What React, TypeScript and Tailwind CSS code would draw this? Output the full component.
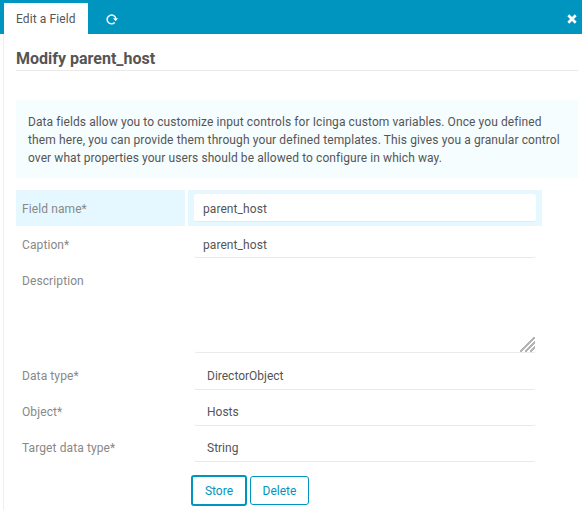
import type { ReactNode } from "react";

function Row({ label, active = false, tall = false, children }: { label: string; active?: boolean; tall?: boolean; children: ReactNode }) {
  return (
    <div className={`flex gap-[3px] ${tall ? "h-[95px]" : "h-9"}`}>
      <label className={`w-[169px] pl-1.5 pt-[10px] tracking-[0.1px] text-[#888] ${active ? "bg-[#e5f8ff]" : ""}`}>{label}</label>
      <div className={`w-[354px] px-1.5 py-1 ${active ? "bg-[#e5f8ff]" : ""}`}>{children}</div>
    </div>
  );
}

const field = "flex w-full rounded-[3px] border-b border-[#eaeaea] bg-white";

export default function App() {
  return (
    <div className="flex h-[510px] w-[582px] flex-col overflow-hidden bg-white font-[Roboto,sans-serif] text-[12px] leading-[18px] text-[#555]">
      <header className="flex h-[34px] shrink-0 bg-[#0095bf] pl-1 pt-[3px]">
        <div className="h-[31px] w-[84px] bg-white pl-3 pt-[7px] tracking-[0.1px]">Edit a Field</div>
        <button className="ml-[18px] mt-[10px] h-3 w-3 text-white" aria-label="Refresh">
          <svg viewBox="0 0 12 12" className="h-3 w-3" fill="none">
            <path d="M8.7 9.5A4.4 4.4 0 1 1 9.9 5.8" stroke="currentColor" strokeWidth="1.4" />
            <path d="M7 5.3H12L9.6 8.2Z" fill="currentColor" />
          </svg>
        </button>
        <button className="ml-auto mr-[5px] mt-[11px] h-[10px] w-[10px] text-white" aria-label="Close">
          <svg viewBox="0 0 10 10" className="h-[10px] w-[10px]">
            <path d="M1.3 1.3 8.7 8.7M8.7 1.3 1.3 8.7" stroke="currentColor" strokeWidth="2.7" />
          </svg>
        </button>
      </header>
      <main className="ml-[3px] flex-1 border-l border-[#eee] pl-3 pr-1">
        <h1 className="h-[37px] border-b border-[#eaeaea] pt-[13px] text-[16px] font-bold leading-[24px]">Modify parent_host</h1>
        <p className="mt-[29px] h-[78px] whitespace-nowrap bg-[#f5fdff] px-3 py-[13px]">
          <span className="tracking-[0.09px]">Data fields allow you to customize input controls for Icinga custom variables. Once you defined</span><br />
          <span className="tracking-[0.108px]">them here, you can provide them through your defined templates. This gives you a granular control</span><br />
          <span className="tracking-[0.08px]">over what properties your users should be allowed to configure in which way.</span>
        </p>
        <form className="mt-3">
          <Row label="Field name*" active>
            <div className={`${field} h-7 pl-[9px] pt-[6px] tracking-[0.07px]`}>parent_host</div>
          </Row>
          <Row label="Caption*">
            <div className={`${field} h-7 pl-[9px] pt-[6px] tracking-[0.07px]`}>parent_host</div>
          </Row>
          <Row label="Description" tall>
            <div className={`${field} h-[87px] items-end justify-end pr-px`}>
              <svg width="15" height="15" viewBox="0 0 15 15" shapeRendering="crispEdges">
                <path d="M0 15 15 0M5 15 15 5M10 15 15 10" stroke="#b4b4b4" strokeWidth="1.5" />
              </svg>
            </div>
          </Row>
          <Row label="Data type*">
            <div className={`${field} h-[29px] pl-[13px] pt-[6px]`}>DirectorObject</div>
          </Row>
          <Row label="Object*">
            <div className={`${field} h-[29px] pl-[13px] pt-[6px]`}>Hosts</div>
          </Row>
          <Row label="Target data type*">
            <div className={`${field} h-[29px] pl-[13px] pt-[6px]`}>String</div>
          </Row>
          <div className="ml-[175px] mt-[10px] flex items-center gap-[3px] text-[#0095bf]">
            <button type="button" className="h-[31px] w-14 rounded-[3px] border-2 border-[#0095bf]">Store</button>
            <button type="button" className="h-[29px] w-[59px] rounded-[3px] border border-[#0095bf]">Delete</button>
          </div>
        </form>
      </main>
    </div>
  );
}
